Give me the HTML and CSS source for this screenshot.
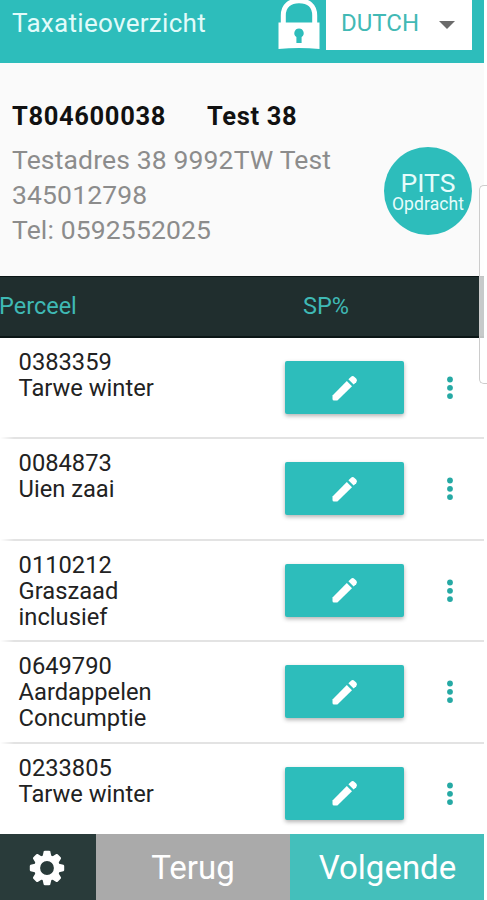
FILE: index.html
```html
<!DOCTYPE html>
<html lang="nl">
<head>
<meta charset="utf-8">
<meta name="viewport" content="width=device-width, initial-scale=1.0">
<title>Taxatieoverzicht</title>
<link rel="stylesheet" href="styles.css">
</head>
<body>

<!-- icons -->
<svg class="sprite" width="0" height="0">
	<symbol id="pencil" viewBox="0 0 26 26">
		<path d="M.5 20.6V24q0 1.5 1.5 1.5h3.4L20 11.2 14.8 6z"/>
		<path d="M16.4 4.3l2.4-2.4q1.9-1.7 3.7 0l1.7 1.7q1.6 1.8 0 3.6l-2.6 2.4z"/>
	</symbol>
	<symbol id="dots" viewBox="0 0 6 24">
		<circle cx="3" cy="3.5" r="2.9"/>
		<circle cx="3" cy="11.8" r="2.9"/>
		<circle cx="3" cy="20.1" r="2.9"/>
	</symbol>
</svg>

<div class="screen">
	<header class="header">
		<h1 class="title">Taxatieoverzicht</h1>
		<svg class="lock" width="42" height="50" viewBox="0 0 42 50">
			<path class="lock-shackle" d="M5.3 24V15.5C5.3 5.5 12 .8 21 .8s15.7 4.7 15.7 14.7V24"/>
			<path class="lock-body" d="M.5 22.5h41V49q-20.5-2-41 0z"/>
			<path class="lock-hole" d="M21 28.5a4.7 4.7 0 0 1 2.6 8.6V43h-5.2v-5.9A4.7 4.7 0 0 1 21 28.5z"/>
		</svg>
		<div class="language">
			<span>DUTCH</span>
			<span class="caret"></span>
		</div>
	</header>

	<section class="info">
		<div>
			<div class="info-title"><span class="info-code">T804600038</span><span>Test 38</span></div>
			<p class="address">Testadres 38 9992TW Test<br>345012798<br>Tel: 0592552025</p>
		</div>
		<div class="badge">
			<span class="badge-name">PITS</span>
			<span class="badge-type">Opdracht</span>
		</div>
	</section>

	<div class="list-head">
		<span class="col-name">Perceel</span>
		<span>SP%</span>
	</div>

	<ul class="list">
		<li class="item">
			<div class="item-name">0383359<br>Tarwe winter</div>
			<div class="edit-btn"><svg class="pencil"><use href="#pencil"/></svg></div>
			<svg class="dots"><use href="#dots"/></svg>
		</li>
		<li class="item">
			<div class="item-name">0084873<br>Uien zaai</div>
			<div class="edit-btn"><svg class="pencil"><use href="#pencil"/></svg></div>
			<svg class="dots"><use href="#dots"/></svg>
		</li>
		<li class="item">
			<div class="item-name">0110212<br>Graszaad<br>inclusief</div>
			<div class="edit-btn"><svg class="pencil"><use href="#pencil"/></svg></div>
			<svg class="dots"><use href="#dots"/></svg>
		</li>
		<li class="item">
			<div class="item-name">0649790<br>Aardappelen<br>Concumptie</div>
			<div class="edit-btn"><svg class="pencil"><use href="#pencil"/></svg></div>
			<svg class="dots"><use href="#dots"/></svg>
		</li>
		<li class="item">
			<div class="item-name">0233805<br>Tarwe winter</div>
			<div class="edit-btn"><svg class="pencil"><use href="#pencil"/></svg></div>
			<svg class="dots"><use href="#dots"/></svg>
		</li>
	</ul>

	<footer class="footer">
		<div class="settings">
			<svg class="gear" viewBox="-18 -18 36 36">
				<circle class="gear-ring" r="9.9"/>
				<path id="tooth" d="M-4.6-11l1.3-5.4q.3-.8 1.2-.8h4.2q.9 0 1.2.8L4.6-11z"/>
				<use href="#tooth" transform="rotate(45)"/>
				<use href="#tooth" transform="rotate(90)"/>
				<use href="#tooth" transform="rotate(135)"/>
				<use href="#tooth" transform="rotate(180)"/>
				<use href="#tooth" transform="rotate(225)"/>
				<use href="#tooth" transform="rotate(270)"/>
				<use href="#tooth" transform="rotate(315)"/>
			</svg>
		</div>
		<div class="back">Terug</div>
		<div class="next">Volgende</div>
	</footer>

	<div class="drawer-edge"></div>
</div>

</body>
</html>
```
FILE: styles.css
```css
*{
	margin: 0;
	padding: 0;
	box-sizing: border-box;
}
body {
	background: #fff;
	font-family: Roboto, "Liberation Sans", sans-serif;
	overflow: hidden;
}
.sprite {
	display: block;
}
.screen {
	position: relative;
	display: flex;
	flex-direction: column;
	width: 484px;
	height: 900px;
}
.header {
	display: flex;
	align-items: flex-start;
	height: 63px;
	padding-left: 12px;
	background: #2dbdbb;
}
.title {
	width: 265px;
	font-size: 26px;
	font-weight: 400;
	line-height: 46px;
	letter-spacing: 0.3px;
	color: #e2fbfa;
}
.lock {
	margin: 0 6px 0 1px;
}
.lock-shackle {
	fill: none;
	stroke: #fff;
	stroke-width: 5;
}
.lock-body {
	fill: #fff;
}
.lock-hole {
	fill: #2dbdbb;
}
.language {
	display: flex;
	align-items: flex-start;
	justify-content: space-between;
	width: 146px;
	height: 50px;
	padding: 0 17px 0 15px;
	background: #fff;
	color: #42b9b5;
	font-size: 24px;
	line-height: 46px;
}
.caret {
	margin-top: 21px;
	border: 8px solid transparent;
	border-top-color: #6b6b6b;
	border-bottom: 0;
}
.info {
	display: flex;
	justify-content: space-between;
	height: 213px;
	padding: 36px 12px 0 12px;
	background: #fafafa;
}
.info-title {
	font-size: 25.5px;
	font-weight: 700;
	line-height: 35px;
	letter-spacing: 0.65px;
	color: #111;
}
.info-code {
	display: inline-block;
	width: 195px;
}
.address {
	margin-top: 8px;
	font-size: 26.5px;
	line-height: 35px;
	letter-spacing: 0.14px;
	color: #8c8c8c;
}
.badge {
	display: flex;
	flex-direction: column;
	align-items: center;
	width: 88px;
	height: 88px;
	margin-top: 48px;
	padding-top: 23px;
	border-radius: 50%;
	background: #2dbdbb;
	color: #e6fcfb;
}
.badge-name {
	font-size: 26.5px;
	line-height: 26px;
}
.badge-type {
	font-size: 17.5px;
	line-height: 16px;
	letter-spacing: 0.1px;
}
.list-head {
	display: flex;
	height: 62px;
	border: solid #0b1616;
	border-width: 1px 0 2px;
	background: #202e2e;
	color: #3fb9b5;
	font-size: 23.5px;
	line-height: 58px;
}
.col-name {
	width: 303px;
	text-indent: -1px;
}
.list {
	flex: 1;
	overflow: hidden;
	list-style: none;
	background: #fff;
}
.item {
	display: flex;
	align-items: flex-start;
	height: 101.4px;
	padding-top: 11px;
	background: linear-gradient(to right, #fff, #e3e3e3 14px) 0 100% / 100% 2px no-repeat;
}
.item-name {
	width: 285px;
	padding-left: 18.6px;
	font-size: 23.7px;
	line-height: 26px;
	color: #222;
}
.edit-btn {
	display: flex;
	align-items: center;
	justify-content: center;
	width: 119px;
	height: 53px;
	margin-top: 12px;
	border-radius: 2px;
	background: #2dbdbb;
	box-shadow: 0 2px 4px rgba(0,0,0,0.3);
}
.pencil {
	width: 26px;
	height: 26px;
	fill: #fff;
}
.dots {
	width: 6px;
	height: 24px;
	margin: 27px 0 0 43px;
	fill: #25a9a4;
}
.footer {
	display: flex;
	height: 66px;
	color: #fff;
	font-size: 33px;
	line-height: 67px;
	text-align: center;
}
.settings {
	display: flex;
	align-items: center;
	justify-content: center;
	width: 96px;
	padding-right: 2px;
	background: #293b3a;
}
.gear {
	width: 36px;
	height: 36px;
	margin-top: 2px;
	fill: #fff;
}
.gear-ring {
	fill: none;
	stroke: #fff;
	stroke-width: 6;
}
.back {
	width: 194px;
	background: #aaa;
}
.next {
	flex: 1;
	padding-left: 1px;
	background: #44bfbb;
}
/* panel sliding in from the right */
.drawer-edge {
	position: absolute;
	top: 185px;
	left: 479px;
	width: 8px;
	height: 199px;
	border: 1px solid #ccc;
	border-right: 0;
	border-radius: 5px 0 0 5px;
	background: rgba(255,255,255,0.75);
}
```
